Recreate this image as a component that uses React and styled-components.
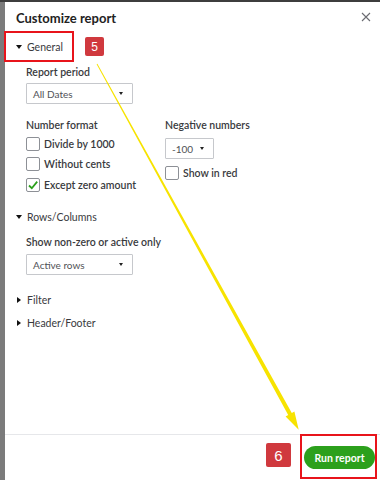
import React from "react";
import styled, { createGlobalStyle } from "styled-components";

const Global = createGlobalStyle`
  html, body {
    margin: 0;
    padding: 0;
    height: 100%;
    overflow: hidden;
  }
  body {
    font-family: 'Lato', 'Open Sans', sans-serif;
    color: #393a3d;
  }
`;

const Backdrop = styled.div`
  position: relative;
  height: 100vh;
  box-sizing: border-box;
  background: #7b7b7b;
  border-top: 2px solid #3e3e3e;
  padding-left: 5px;
  display: flex;
`;

const Panel = styled.div`
  flex: 1;
  background: #fff;
  display: flex;
  flex-direction: column;
`;

const Header = styled.div`
  display: flex;
  align-items: center;
  justify-content: space-between;
  padding: 8px 8px 0 11px;
  height: 16px;
`;

const Title = styled.h1`
  margin: 0;
  font-size: 13px;
  font-weight: 700;
  color: #222;
  line-height: 16px;
`;

const Close = styled.button`
  border: 0;
  background: none;
  padding: 0;
  width: 12px;
  height: 12px;
  display: flex;
  align-items: center;
  justify-content: center;
  margin-top: -2px;
`;

const Body = styled.div`
  flex: 1;
  padding: 14px 0 0 11px;
  display: flex;
  flex-direction: column;
`;

const Toggle = styled.div`
  position: relative;
  display: flex;
  align-items: center;
  gap: 4px;
  height: 14px;
  font-size: 10.5px;
  color: #393a3d;
  margin-top: ${p => p.$top || 0}px;

  &::before {
    content: "";
    display: ${p => (p.$marked ? "block" : "none")};
    position: absolute;
    left: -12px;
    top: -9px;
    width: 66px;
    height: 27px;
    border: 2px solid #e8141b;
  }
`;

const Caret = styled.span`
  width: 0;
  height: 0;
  border-style: solid;
  ${p =>
    p.$open
      ? "border-width: 4px 3.5px 0 3.5px; border-color: #111 transparent transparent transparent; margin-right: 1px;"
      : "border-width: 3.5px 0 3.5px 4px; border-color: transparent transparent transparent #111; margin-left: 1px; margin-right: 2px;"}
`;

const Badge = styled.span`
  position: absolute;
  left: 69px;
  top: -3px;
  width: 19px;
  height: 19px;
  border-radius: 2px;
  background: #d0393e;
  color: #fff;
  font-size: 12px;
  display: flex;
  align-items: center;
  justify-content: center;
  font-family: 'Liberation Sans', sans-serif;
`;

const Section = styled.div`
  padding-left: 10px;
  margin-top: ${p => p.$top}px;
  display: flex;
  flex-direction: column;
`;

const Label = styled.div`
  font-size: 10.5px;
  font-weight: 600;
  color: #393a3d;
  line-height: 14px;
  margin-bottom: ${p => p.$gap || 0}px;
`;

const Select = styled.div`
  box-sizing: border-box;
  width: ${p => p.$width}px;
  height: 21px;
  border: 1px solid #c6c8cc;
  border-radius: 1px;
  display: flex;
  align-items: center;
  justify-content: space-between;
  padding: 0 9px 0 6px;
  font-size: 10px;
  color: #505256;

  &::after {
    content: "";
    border-style: solid;
    border-width: 3px 2.5px 0 2.5px;
    border-color: #222 transparent transparent transparent;
  }
`;

const Columns = styled.div`
  display: grid;
  grid-template-columns: 139px 1fr;
  margin-top: 14px;
`;

const Column = styled.div`
  display: flex;
  flex-direction: column;
`;

const Check = styled.label`
  display: flex;
  align-items: center;
  gap: 4px;
  height: 14px;
  font-size: 10.5px;
  font-weight: 600;
  color: #393a3d;
  margin-top: ${p => p.$top || 0}px;
`;

const Box = styled.span`
  box-sizing: border-box;
  width: 14px;
  height: 14px;
  border: 1px solid #8d9096;
  border-radius: 2px;
  display: flex;
  align-items: center;
  justify-content: center;
  background: #fff;
`;

const Footer = styled.div`
  border-top: 1px solid #e6e7ea;
  height: 45px;
  display: flex;
  align-items: flex-end;
  justify-content: flex-end;
  padding-right: 3px;
`;

const Marked = styled.div`
  box-sizing: border-box;
  width: 77px;
  height: 45px;
  border: 2px solid #e8141b;
  margin-bottom: 1px;
  display: flex;
  padding: 10px 0 0 2px;
`;

const RunButton = styled.button`
  width: 71px;
  height: 23px;
  border: 0;
  border-radius: 12px;
  background: #2ca01c;
  color: #fff;
  font-family: 'Lato', sans-serif;
  font-weight: 700;
  font-size: 10.5px;
  padding: 0;
`;

const StepBadge = styled.span`
  width: 25px;
  height: 24px;
  border-radius: 2px;
  background: #d0393e;
  color: #fff;
  font-size: 15px;
  font-family: 'Liberation Sans', sans-serif;
  display: flex;
  align-items: center;
  justify-content: center;
  margin: 0 9px 13px 0;
`;

const Arrow = styled.svg`
  position: absolute;
  left: 0;
  top: 0;
  pointer-events: none;
`;

const CheckMark = () => (
  <svg width="12" height="12" viewBox="0 0 12 12">
    <path d="M2 6.5 L4.8 9.2 L10.2 2.6" fill="none" stroke="#2ca01c" strokeWidth="1.8" />
  </svg>
);

const CheckRow = ({ checked, children, top }) => (
  <Check $top={top}>
    <Box>{checked && <CheckMark />}</Box>
    {children}
  </Check>
);

export default function App() {
  return (
    <>
      <Global />
      <Backdrop>
        <Panel>
          <Header>
            <Title>Customize report</Title>
            <Close aria-label="close">
              <svg width="10" height="10" viewBox="0 0 10 10">
                <path d="M1 1 L9 9 M9 1 L1 9" stroke="#6b6c72" strokeWidth="1.1" />
              </svg>
            </Close>
          </Header>
          <Body>
            <Toggle $marked>
              <Caret $open />
              General
              <Badge>5</Badge>
            </Toggle>
            <Section $top={11}>
              <Label $gap={4}>Report period</Label>
              <Select $width={107}>All Dates</Select>
              <Columns>
                <Column>
                  <Label $gap={5}>Number format</Label>
                  <CheckRow>Divide by 1000</CheckRow>
                  <CheckRow top={6}>Without cents</CheckRow>
                  <CheckRow top={7} checked>Except zero amount</CheckRow>
                </Column>
                <Column>
                  <Label $gap={6}>Negative numbers</Label>
                  <Select $width={49}>-100</Select>
                  <CheckRow top={7}>Show in red</CheckRow>
                </Column>
              </Columns>
            </Section>
            <Toggle $top={18}>
              <Caret $open />
              Rows/Columns
            </Toggle>
            <Section $top={11}>
              <Label $gap={5}>Show non-zero or active only</Label>
              <Select $width={107}>Active rows</Select>
            </Section>
            <Toggle $top={18}>
              <Caret />
              Filter
            </Toggle>
            <Toggle $top={9}>
              <Caret />
              Header/Footer
            </Toggle>
          </Body>
          <Footer>
            <StepBadge>6</StepBadge>
            <Marked>
              <RunButton>Run report</RunButton>
            </Marked>
          </Footer>
        </Panel>
        <Arrow width="380" height="480" viewBox="0 0 380 480">
          <polygon
            points="96.6,62.2 97.4,61.8 291.8,411 294.4,409.6 298.7,427.8 285.6,414.4 288.2,413"
            fill="#f7e300"
          />
        </Arrow>
      </Backdrop>
    </>
  );
}
